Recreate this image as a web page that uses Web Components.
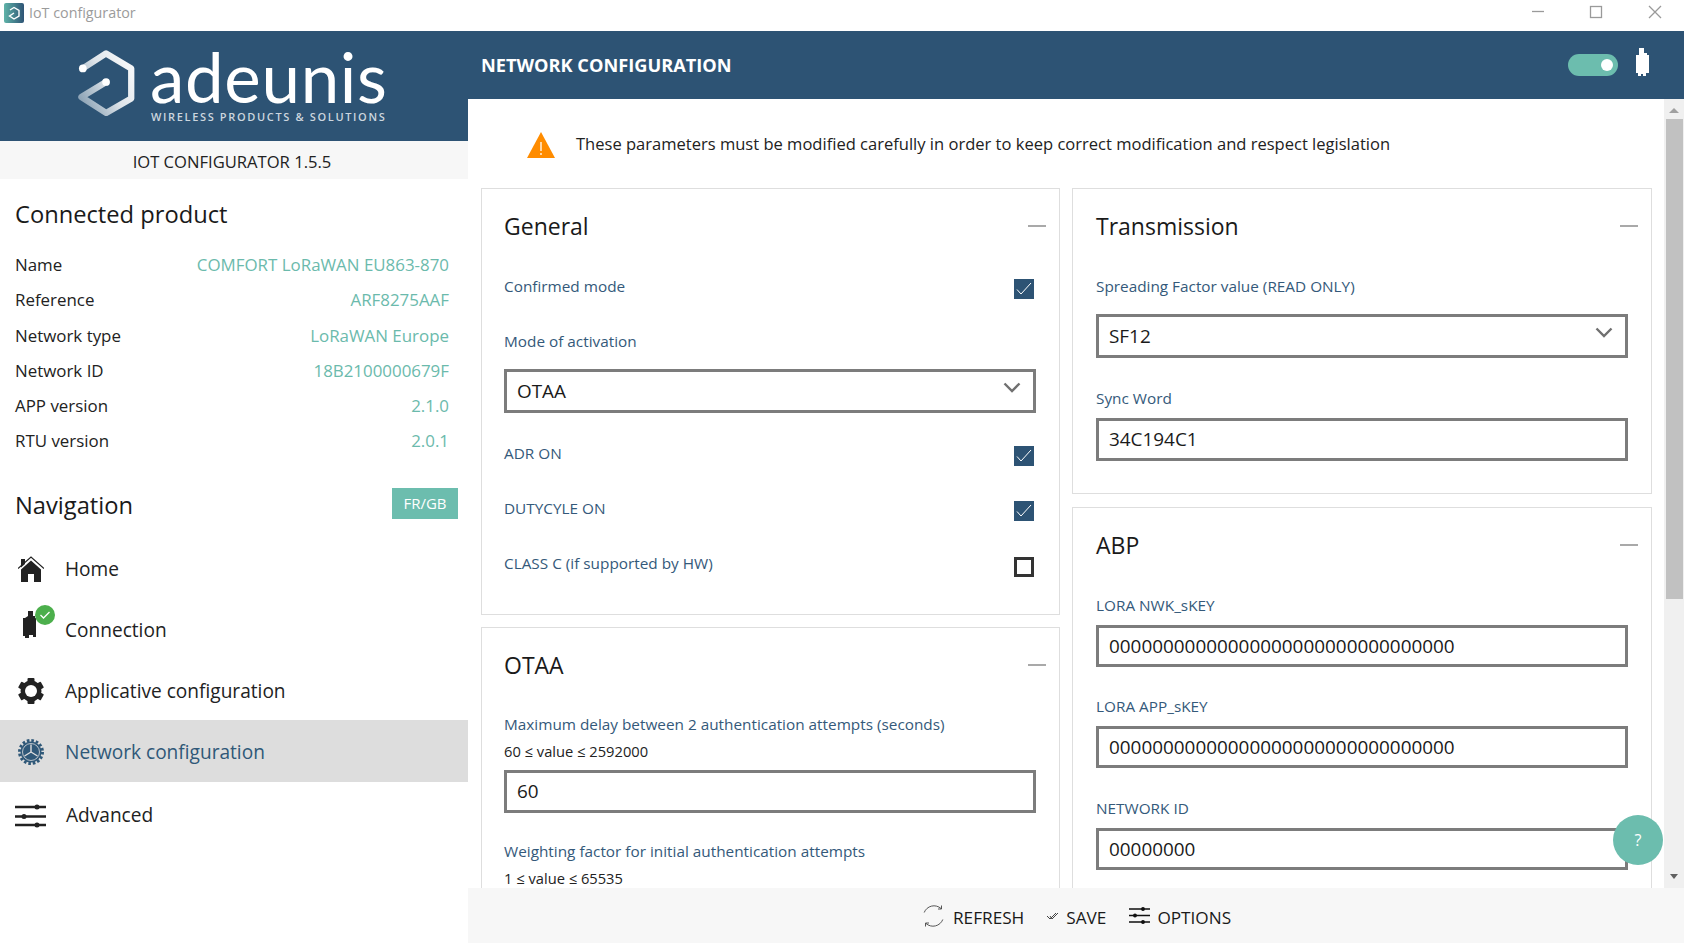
<!DOCTYPE html>
<html>
<head>
<meta charset="utf-8">
<title>IoT configurator</title>
<style>
  html, body { margin: 0; height: 100%; overflow: hidden; background: #fff; }
  body { font-family: "Open Sans", "Liberation Sans", sans-serif; color: #1a1a1a; }
</style>
</head>
<body>
<iot-app>
  <title-bar slot="top"></title-bar>
  <side-bar slot="side">
    <info-row slot="info" name="Name" value="COMFORT LoRaWAN EU863-870"></info-row>
    <info-row slot="info" name="Reference" value="ARF8275AAF"></info-row>
    <info-row slot="info" name="Network type" value="LoRaWAN Europe"></info-row>
    <info-row slot="info" name="Network ID" value="18B2100000679F"></info-row>
    <info-row slot="info" name="APP version" value="2.1.0"></info-row>
    <info-row slot="info" name="RTU version" value="2.0.1"></info-row>
    <nav-item slot="nav" icon="home">Home</nav-item>
    <nav-item slot="nav" icon="device">Connection</nav-item>
    <nav-item slot="nav" icon="gear">Applicative configuration</nav-item>
    <nav-item slot="nav" icon="netgear" active>Network configuration</nav-item>
    <nav-item slot="nav" icon="sliders">Advanced</nav-item>
  </side-bar>
  <page-header slot="head">NETWORK CONFIGURATION</page-header>
  <scroll-pane slot="main">
    <warn-note>These parameters must be modified carefully in order to keep correct modification and respect legislation</warn-note>
    <div style="display:grid;grid-template-columns:579px 580px;column-gap:12px;align-items:start">
      <div style="display:flex;flex-direction:column;gap:12px">
        <config-card heading="General" style="padding-bottom:26px;padding-left:22px">
          <check-field checked>Confirmed mode</check-field>
          <choice-field label="Mode of activation" value="OTAA" style="margin-top:19px"></choice-field>
          <check-field checked style="margin-top:16px;--ty:0px;--by:5px">ADR ON</check-field>
          <check-field checked style="margin-top:8px;--ty:-3px">DUTYCYLE ON</check-field>
          <check-field style="margin-top:7px;--by:5px">CLASS C (if supported by HW)</check-field>
        </config-card>
        <config-card heading="OTAA" style="padding-bottom:60px;padding-left:22px">
          <text-field label="Maximum delay between 2 authentication attempts (seconds)" hint="60 ≤ value ≤ 2592000" value="60" style="margin-top:11px"></text-field>
          <text-field label="Weighting factor for initial authentication attempts" hint="1 ≤ value ≤ 65535" style="margin-top:27px"></text-field>
        </config-card>
      </div>
      <div style="display:flex;flex-direction:column;gap:13px">
        <config-card heading="Transmission" style="padding-bottom:32px">
          <choice-field label="Spreading Factor value (READ ONLY)" value="SF12" style="margin-top:12px"></choice-field>
          <text-field label="Sync Word" value="34C194C1" style="margin-top:29px"></text-field>
        </config-card>
        <config-card heading="ABP" style="padding-bottom:60px">
          <text-field label="LORA NWK_sKEY" value="00000000000000000000000000000000" style="margin-top:12px"></text-field>
          <text-field label="LORA APP_sKEY" value="00000000000000000000000000000000" style="margin-top:27.500px"></text-field>
          <text-field label="NETWORK ID" value="00000000" style="margin-top:28.500px"></text-field>
        </config-card>
      </div>
    </div>
  </scroll-pane>
  <foot-bar slot="foot"></foot-bar>
  <help-button slot="help"></help-button>
</iot-app>

<script>
const ICONS = {
  home: `<svg width="26" height="26" viewBox="0 0 26 26"><path d="M0 12.500 13 1l13 11.500" fill="none" stroke="currentColor" stroke-width="1.200"/><path d="M3 3h4v5l-4 3.500zM3 13.500 13 4.500l10 9V26h-7v-8h-6v8H3z" fill="currentColor"/></svg>`,
  device: `<svg width="36" height="36" viewBox="0 0 36 36"><path d="M7 6h5v5h2v2h1v19h-3v-2H8v3H4v-2H2V13h2l3-2z" fill="currentColor"/><circle cx="24" cy="10" r="10" fill="#4caf4c"/><path d="M19.500 10l3 3 6-6" fill="none" stroke="#fff" stroke-width="1.300"/></svg>`,
  gear: `<svg width="26" height="26" viewBox="0 0 26 26"><g fill="currentColor"><rect x="9.500" y="0" width="7" height="26" rx="1"/><rect x="9.500" y="0" width="7" height="26" rx="1" transform="rotate(60 13 13)"/><rect x="9.500" y="0" width="7" height="26" rx="1" transform="rotate(120 13 13)"/></g><circle cx="13" cy="13" r="8" fill="none" stroke="currentColor" stroke-width="5"/><circle cx="13" cy="13" r="6" fill="#fff"/></svg>`,
  netgear: `<svg width="26" height="26" viewBox="0 0 26 26"><circle cx="13" cy="13" r="11.500" fill="none" stroke="currentColor" stroke-width="3" stroke-dasharray="2.600 1.915"/><circle cx="13" cy="13" r="10.500" fill="currentColor"/><circle cx="13" cy="13" r="8.500" fill="none" stroke="#ddd" stroke-width=".8"/><path d="M13 13V5.500M13 13l-6.500 4M13 13l6.500 4" stroke="#ddd" stroke-width="1.400"/></svg>`,
  sliders: `<svg width="32" height="24" viewBox="0 0 32 24"><path d="M0 3h31M0 12.500h31M0 21h31" stroke="currentColor" stroke-width="2.400"/><circle cx="22" cy="3" r="2.500" fill="currentColor"/><circle cx="9" cy="12.500" r="2.500" fill="currentColor"/><circle cx="22" cy="21" r="2.500" fill="currentColor"/></svg>`
};

class IotApp extends HTMLElement {
  constructor() {
    super();
    this.attachShadow({ mode: 'open' }).innerHTML = `
      <style>
        :host { display: grid; width: 1684px; height: 943px; position: relative; overflow: hidden;
          grid-template: 31px 68px 1fr 55px / 468px 1fr; }
        .top { grid-column: 1 / 3; grid-row: 1; }
        .side { grid-column: 1; grid-row: 2 / 5; min-height: 0; }
        .head { grid-column: 2; grid-row: 2; }
        .main { grid-column: 2; grid-row: 3; min-height: 0; }
        .foot { grid-column: 2; grid-row: 4; }
        ::slotted(*) { min-height: 0; }
      </style>
      <div class="top"><slot name="top"></slot></div>
      <div class="side"><slot name="side"></slot></div>
      <div class="head"><slot name="head"></slot></div>
      <div class="main"><slot name="main"></slot></div>
      <div class="foot"><slot name="foot"></slot></div>
      <slot name="help"></slot>`;
  }
}

class TitleBar extends HTMLElement {
  constructor() {
    super();
    this.attachShadow({ mode: 'open' }).innerHTML = `
      <style>
        :host { display: flex; align-items: center; height: 31px; background: #fff; color: #9b9b9b;
          font-size: 14.300px; padding-left: 4px; }
        .logo { width: 20px; height: 20px; margin-top: -5px; margin-right: 5px; flex: none; }
        .name { flex: 1; margin-top: -6px; }
        .ctl svg { display: block; }
      </style>
      <svg class="logo" viewBox="0 0 20 20">
        <defs><linearGradient id="g" x1="0" x2="1"><stop offset="0" stop-color="#5fb3a8"/><stop offset="1" stop-color="#2e5475"/></linearGradient></defs>
        <rect width="20" height="20" rx="2" fill="url(#g)"/>
        <path d="M6 7l4-2.500 5 3v5.500l-5 3-4.500-3L10 10" fill="none" stroke="#fff" stroke-width="1.400"/>
      </svg>
      <span class="name">IoT configurator</span>
      <div class="ctl">
        <svg width="152" height="31" viewBox="0 0 152 31" fill="none" stroke="#9a9a9a" stroke-width="1.300">
          <path d="M0 11.500h12"/>
          <rect x="58.500" y="6.500" width="11" height="11"/>
          <path d="M117 6l12 12M129 6l-12 12"/>
        </svg>
      </div>`;
  }
}

class SideBar extends HTMLElement {
  constructor() {
    super();
    this.attachShadow({ mode: 'open' }).innerHTML = `
      <style>
        :host { display: block; height: 100%; background: #fff; }
        .brand { height: 110px; background: #2d5374; display: flex; box-sizing: border-box; padding: 17px 0 0 78px; }
        .brand svg { flex: none; width: 60px; height: 68px; }
        .words { margin-left: 12px; color: #fff; }
        .big { font-family: "Lato", sans-serif; font-size: 69px; line-height: 62px; height: 60px; letter-spacing: .700px; margin-top: -2px; font-weight: 400; }
        .small { font-size: 11px; line-height: 16px; font-weight: 600; letter-spacing: 1.650px; color: #ccd6df; white-space: nowrap; margin-top: 3px; margin-left: 1px; }
        .version { height: 38px; line-height: 41px; background: #f7f7f7; text-align: center; font-size: 16.600px; color: #222; padding-right: 4px; box-sizing: border-box; }
        h2 { margin: 0; font-weight: 400; font-size: 23.700px; color: #1a1a1a; }
        .product { margin: 17px 0 0 15px; line-height: 36px; }
        .info { margin: 15px 19px 0 15px; }
        .navhead { display: flex; justify-content: space-between; align-items: center; height: 31px; margin: 29.200px 10px 0 15px; }
        .navhead h2 { margin-top: 3px; }
        .lang { width: 66px; height: 31px; line-height: 30px; background: #6cbdae; color: #fff; text-align: center; font-size: 15px; }
        .nav { margin-top: 19px; }
      </style>
      <div class="brand">
        <svg viewBox="0 0 62 70">
          <defs><linearGradient id="h" x1="0" y1="1" x2="1" y2="0.300"><stop offset="0" stop-color="#7f98ad"/><stop offset=".6" stop-color="#dfe5ea"/><stop offset="1" stop-color="#f4f6f8"/></linearGradient></defs>
          <path d="M5 21 29 5.500l26 15.500v31L29 67 3.500 50.500 29 35" fill="none" stroke="url(#h)" stroke-width="6.500" stroke-linejoin="round"/>
          <circle cx="5" cy="21" r="4" fill="#fff"/><circle cx="29" cy="35" r="4" fill="#fff"/>
        </svg>
        <div class="words"><div class="big">adeunis</div><div class="small">WIRELESS PRODUCTS &amp; SOLUTIONS</div></div>
      </div>
      <div class="version">IOT CONFIGURATOR 1.5.5</div>
      <h2 class="product">Connected product</h2>
      <div class="info"><slot name="info"></slot></div>
      <div class="navhead"><h2>Navigation</h2><div class="lang">FR/GB</div></div>
      <div class="nav"><slot name="nav"></slot></div>`;
  }
}

class InfoRow extends HTMLElement {
  constructor() {
    super();
    this.attachShadow({ mode: 'open' }).innerHTML = `
      <style>
        :host { display: flex; justify-content: space-between; height: 35.300px; line-height: 35.300px; font-size: 16.900px; color: #222; }
        .v { color: #6bbaac; }
      </style>
      <span class="n"></span><span class="v"></span>`;
    this.shadowRoot.querySelector('.n').textContent = this.getAttribute('name');
    this.shadowRoot.querySelector('.v').textContent = this.getAttribute('value');
  }
}

class NavItem extends HTMLElement {
  constructor() {
    super();
    this.attachShadow({ mode: 'open' }).innerHTML = `
      <style>
        :host { display: flex; align-items: center; box-sizing: border-box; height: 61.250px; padding-left: 15px; font-size: 19.100px; color: #222; }
        :host([active]) { background: #ddd; color: #2f5878; height: 62.500px; margin: -2px 0 1.750px; padding-top: 3px; }
        .ic { width: 50px; flex: none; display: flex; justify-content: flex-start; }
        svg { display: block; }
        :host([icon=home]) .ic, :host([icon=gear]) .ic, :host([icon=netgear]) .ic { padding-left: 3px; width: 47px; }
        :host([icon=device]) .ic { padding-left: 6px; width: 44px; margin-top: -14px; }
        :host([icon=sliders]) .ic { width: 51px; margin-top: 3px; }
      </style>
      <span class="ic"></span><span><slot></slot></span>`;
    this.shadowRoot.querySelector('.ic').innerHTML = ICONS[this.getAttribute('icon')];
  }
}

class PageHeader extends HTMLElement {
  constructor() {
    super();
    this.attachShadow({ mode: 'open' }).innerHTML = `
      <style>
        :host { display: flex; align-items: center; height: 68px; background: #2d5374; color: #fff; padding-left: 13px; font-size: 18.200px; font-weight: 700; }
        .t { flex: 1; }
        .sw { width: 50px; height: 22px; border-radius: 11px; background: #6cbdae; display: flex; justify-content: flex-end; align-items: center; padding-right: 5px; box-sizing: border-box; margin-right: 18px; }
        .sw i { width: 12px; height: 12px; border-radius: 50%; background: #fff; }
        svg { margin-right: 34px; display: block; margin-top: -7px; }
      </style>
      <span class="t"><slot></slot></span>
      <span class="sw"><i></i></span>
      <svg width="14" height="28" viewBox="0 0 14 28"><path d="M3 0h5v5h3v2h2v18h-3v3H7v-2H5v2H2v-3H0V7h3z" fill="#fff"/></svg>`;
  }
}

class ScrollPane extends HTMLElement {
  constructor() {
    super();
    this.attachShadow({ mode: 'open' }).innerHTML = `
      <style>
        :host { display: flex; height: 100%; overflow: hidden; }
        .view { flex: 1; overflow: hidden; padding-left: 13px; min-width: 0; }
        .bar { width: 20px; flex: none; background: #f0f0f0; display: flex; flex-direction: column; align-items: center; }
        .up { width: 0; height: 0; border: 5px solid transparent; border-top: 0; border-bottom: 5px solid #a0a0a0; margin-top: 9px; }
        .thumb { width: 17px; height: 480px; background: #c1c1c1; margin-top: 6px; }
        .down { width: 0; height: 0; border: 4.500px solid transparent; border-bottom: 0; border-top: 5px solid #606060; margin-top: auto; margin-bottom: 9px; }
      </style>
      <div class="view"><slot></slot></div>
      <div class="bar"><i class="up"></i><i class="thumb"></i><i class="down"></i></div>`;
  }
}

class WarnNote extends HTMLElement {
  constructor() {
    super();
    this.attachShadow({ mode: 'open' }).innerHTML = `
      <style>
        :host { display: flex; align-items: center; height: 89px; font-size: 16.540px; color: #222; padding-left: 46px; }
        svg { flex: none; width: 28px; height: 26px; margin: 2px 21px 0 0; }
        span { margin-top: -1px; }
      </style>
      <svg viewBox="0 0 28 26"><path d="M14 0 28 26H0z" fill="#ff8c00"/><path d="M14 10v9" stroke="#fff" stroke-width="1.300"/><path d="M14 21v2" stroke="#fff" stroke-width="1.300"/></svg>
      <span><slot></slot></span>`;
  }
}

class ConfigCard extends HTMLElement {
  constructor() {
    super();
    this.attachShadow({ mode: 'open' }).innerHTML = `
      <style>
        :host { display: block; border: 1px solid #dedede; padding: 0 23px; background: #fff; }
        .h { display: flex; justify-content: space-between; align-items: center; height: 74px; font-size: 23px; color: #1a1a1a; }
        i { width: 18px; height: 2px; background: #a9a9a9; margin-right: -10px; }
      </style>
      <div class="h"><span class="t"></span><i></i></div>
      <slot></slot>`;
    this.shadowRoot.querySelector('.t').textContent = this.getAttribute('heading');
  }
}

class CheckField extends HTMLElement {
  constructor() {
    super();
    this.attachShadow({ mode: 'open' }).innerHTML = `
      <style>
        :host { display: flex; justify-content: space-between; align-items: center; height: 48px; font-size: 15.340px; color: #34597a; }
        span { margin-top: var(--ty, -2px); }
        .box { width: 20px; height: 20px; box-sizing: border-box; margin: var(--by, 4px) 2px 0 0; border: 3px solid #333; }
        :host([checked]) .box { background: #2d5374; border: 0; }
        svg { display: none; }
        :host([checked]) svg { display: block; }
      </style>
      <span><slot></slot></span>
      <div class="box"><svg width="20" height="20" viewBox="0 0 20 20"><path d="M3 10.500l4 4.500 10-11" fill="none" stroke="#fff" stroke-width="1"/></svg></div>`;
  }
}

const fieldStyle = `
  :host { display: block; }
  .l { font-size: 15.340px; line-height: 22px; color: #34597a; }
  .hint { font-size: 14.700px; line-height: 20px; color: #222; margin-top: 6px; }
  .box { display: flex; align-items: center; justify-content: space-between; box-sizing: border-box; border: 3px solid #7c7c7c; padding: 0 10px; font-size: 18.900px; color: #1a1a1a; background: #fff; }
`;

class ChoiceField extends HTMLElement {
  constructor() {
    super();
    this.attachShadow({ mode: 'open' }).innerHTML = `
      <style>${fieldStyle}
        .box { height: 44px; margin-top: 17px; }
        svg { display: block; margin: -7px 2px 0 0; }
      </style>
      <div class="l"></div>
      <div class="box"><span class="v"></span><svg width="18" height="11" viewBox="0 0 18 11"><path d="M1.500 1.500 9 9l7.500-7.500" fill="none" stroke="#707070" stroke-width="2.400"/></svg></div>`;
    this.shadowRoot.querySelector('.l').textContent = this.getAttribute('label');
    this.shadowRoot.querySelector('.v').textContent = this.getAttribute('value');
  }
}

class TextField extends HTMLElement {
  constructor() {
    super();
    const hint = this.getAttribute('hint');
    const value = this.getAttribute('value');
    this.attachShadow({ mode: 'open' }).innerHTML = `
      <style>${fieldStyle}
        .box { height: 42.500px; margin-top: 9px; }
      </style>
      <div class="l"></div>
      ${hint ? '<div class="hint"></div>' : ''}
      ${value ? '<div class="box"><span class="v"></span></div>' : ''}`;
    this.shadowRoot.querySelector('.l').textContent = this.getAttribute('label');
    if (value) this.shadowRoot.querySelector('.v').textContent = value;
    if (hint) this.shadowRoot.querySelector('.hint').textContent = hint;
  }
}

class FootBar extends HTMLElement {
  constructor() {
    super();
    this.attachShadow({ mode: 'open' }).innerHTML = `
      <style>
        :host { display: flex; align-items: center; height: 55px; background: #f7f7f7; padding-left: 453px; font-size: 17.200px; color: #1a1a1a; box-sizing: border-box; }
        span { display: inline-flex; align-items: center; }
        b { font-weight: 400; margin-top: 3px; }
        svg { display: block; flex: none; }
        .r { margin-right: 23px; } .s { margin-right: 23px; }
        .r svg { margin-right: 7px; } .s svg { margin-right: 7px; } .o svg { margin-right: 7px; }
      </style>
      <span class="r"><svg width="25" height="24" viewBox="0 0 25 24" fill="none" stroke="#444" stroke-width=".9"><path d="M3.200 8.500A10.500 10.500 0 0 1 20 4.500M21.800 15.500A10.500 10.500 0 0 1 5 19.500"/><path d="M20.500 1.500v3.500h-3.500M4.500 22.500V19H8"/></svg><b>REFRESH</b></span>
      <span class="s"><svg width="12" height="8" viewBox="0 0 12 8" fill="none" stroke="#444" stroke-width="1"><path d="M0 4l3 3 6-6M3 4l2 3 6-6"/></svg><b>SAVE</b></span>
      <span class="o"><svg width="21" height="17" viewBox="0 0 21 17" fill="none" stroke="#111" stroke-width="1.500"><path d="M0 2h21M0 8.500h21M0 15h21"/><circle cx="14" cy="2" r="1.200" fill="#111"/><circle cx="6" cy="8.500" r="1.200" fill="#111"/><circle cx="14" cy="15" r="1.200" fill="#111"/></svg><b>OPTIONS</b></span>`;
  }
}

class HelpButton extends HTMLElement {
  constructor() {
    super();
    this.attachShadow({ mode: 'open' }).innerHTML = `
      <style>
        :host { position: absolute; left: 1613px; top: 815px; width: 50px; height: 50px; border-radius: 50%; background: #6cbdae; color: #fff; display: flex; align-items: center; justify-content: center; font-size: 16px; }
      </style>?`;
  }
}

customElements.define('iot-app', IotApp);
customElements.define('title-bar', TitleBar);
customElements.define('side-bar', SideBar);
customElements.define('info-row', InfoRow);
customElements.define('nav-item', NavItem);
customElements.define('page-header', PageHeader);
customElements.define('scroll-pane', ScrollPane);
customElements.define('warn-note', WarnNote);
customElements.define('config-card', ConfigCard);
customElements.define('check-field', CheckField);
customElements.define('choice-field', ChoiceField);
customElements.define('text-field', TextField);
customElements.define('foot-bar', FootBar);
customElements.define('help-button', HelpButton);
</script>
</body>
</html>
